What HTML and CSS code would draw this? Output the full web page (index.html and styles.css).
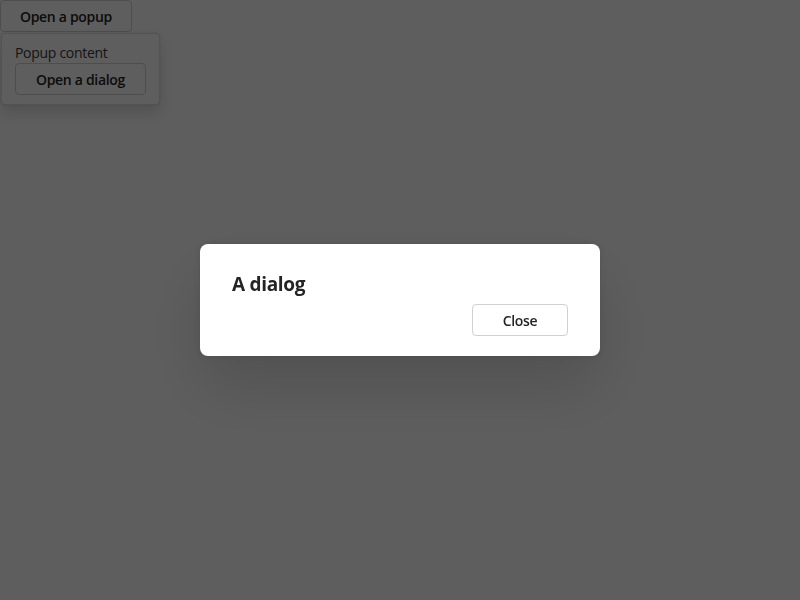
FILE: index.html
```html
<!DOCTYPE html>
<html>
<head>
<meta charset="utf-8">
<link rel="stylesheet" href="styles.css">
</head>
<body>
<div class="page">
  <button class="btn btn-popup">Open a popup</button>
  <div class="popover">
    <div class="popover-text">Popup content</div>
    <button class="btn btn-dialog">Open a dialog</button>
  </div>
</div>
<div class="backdrop">
  <div class="dialog" role="dialog">
    <h2 class="dialog-title">A dialog</h2>
    <div class="dialog-actions">
      <button class="btn btn-close">Close</button>
    </div>
  </div>
</div>
</body>
</html>
```
FILE: styles.css
```css
* { box-sizing: border-box; }
html, body { margin: 0; padding: 0; width: 800px; height: 600px; overflow: hidden; background: #ffffff; }
body { font-family: "Open Sans", "Noto Sans", sans-serif; color: #242424; font-size: 14px; }
.page { position: relative; }
.btn {
  font-family: inherit;
  font-size: 14px;
  font-weight: 600;
  color: #242424;
  background: #ffffff;
  border: 1px solid #d1d1d1;
  border-radius: 4px;
  height: 32px;
  padding: 0 12px;
  display: flex;
  align-items: center;
  justify-content: center;
  letter-spacing: -0.3px;
}
.btn-popup { width: 132px; }
.popover {
  position: absolute;
  top: 33px;
  left: 1px;
  width: 159px;
  height: 72px;
  background: #ffffff;
  border: 1px solid #e0e0e0;
  border-radius: 4px;
  padding: 9px 13px;
  box-shadow: 0 0 2px rgba(0,0,0,0.12), 0 8px 16px rgba(0,0,0,0.14);
}
.popover-text { line-height: 20px; height: 20px; font-weight: 400; letter-spacing: -0.3px; color: #3a3a3a; }
.btn-dialog { width: 131px; }
.backdrop {
  position: fixed;
  inset: 0;
  background: rgba(0,0,0,0.63);
  display: flex;
  align-items: center;
  justify-content: center;
}
.dialog {
  width: 400px;
  height: 112px;
  background: #ffffff;
  border-radius: 8px;
  padding: 26px 32px 20px 32px;
  box-shadow: 0 0 8px rgba(0,0,0,0.12), 0 32px 64px rgba(0,0,0,0.14);
  display: flex;
  flex-direction: column;
}
.dialog-title {
  margin: 0;
  font-size: 19px;
  line-height: 28px;
  font-weight: 700;
  letter-spacing: -0.3px;
}
.dialog-actions { display: flex; justify-content: flex-end; margin-top: 6px; }
.btn-close { width: 96px; }
```
